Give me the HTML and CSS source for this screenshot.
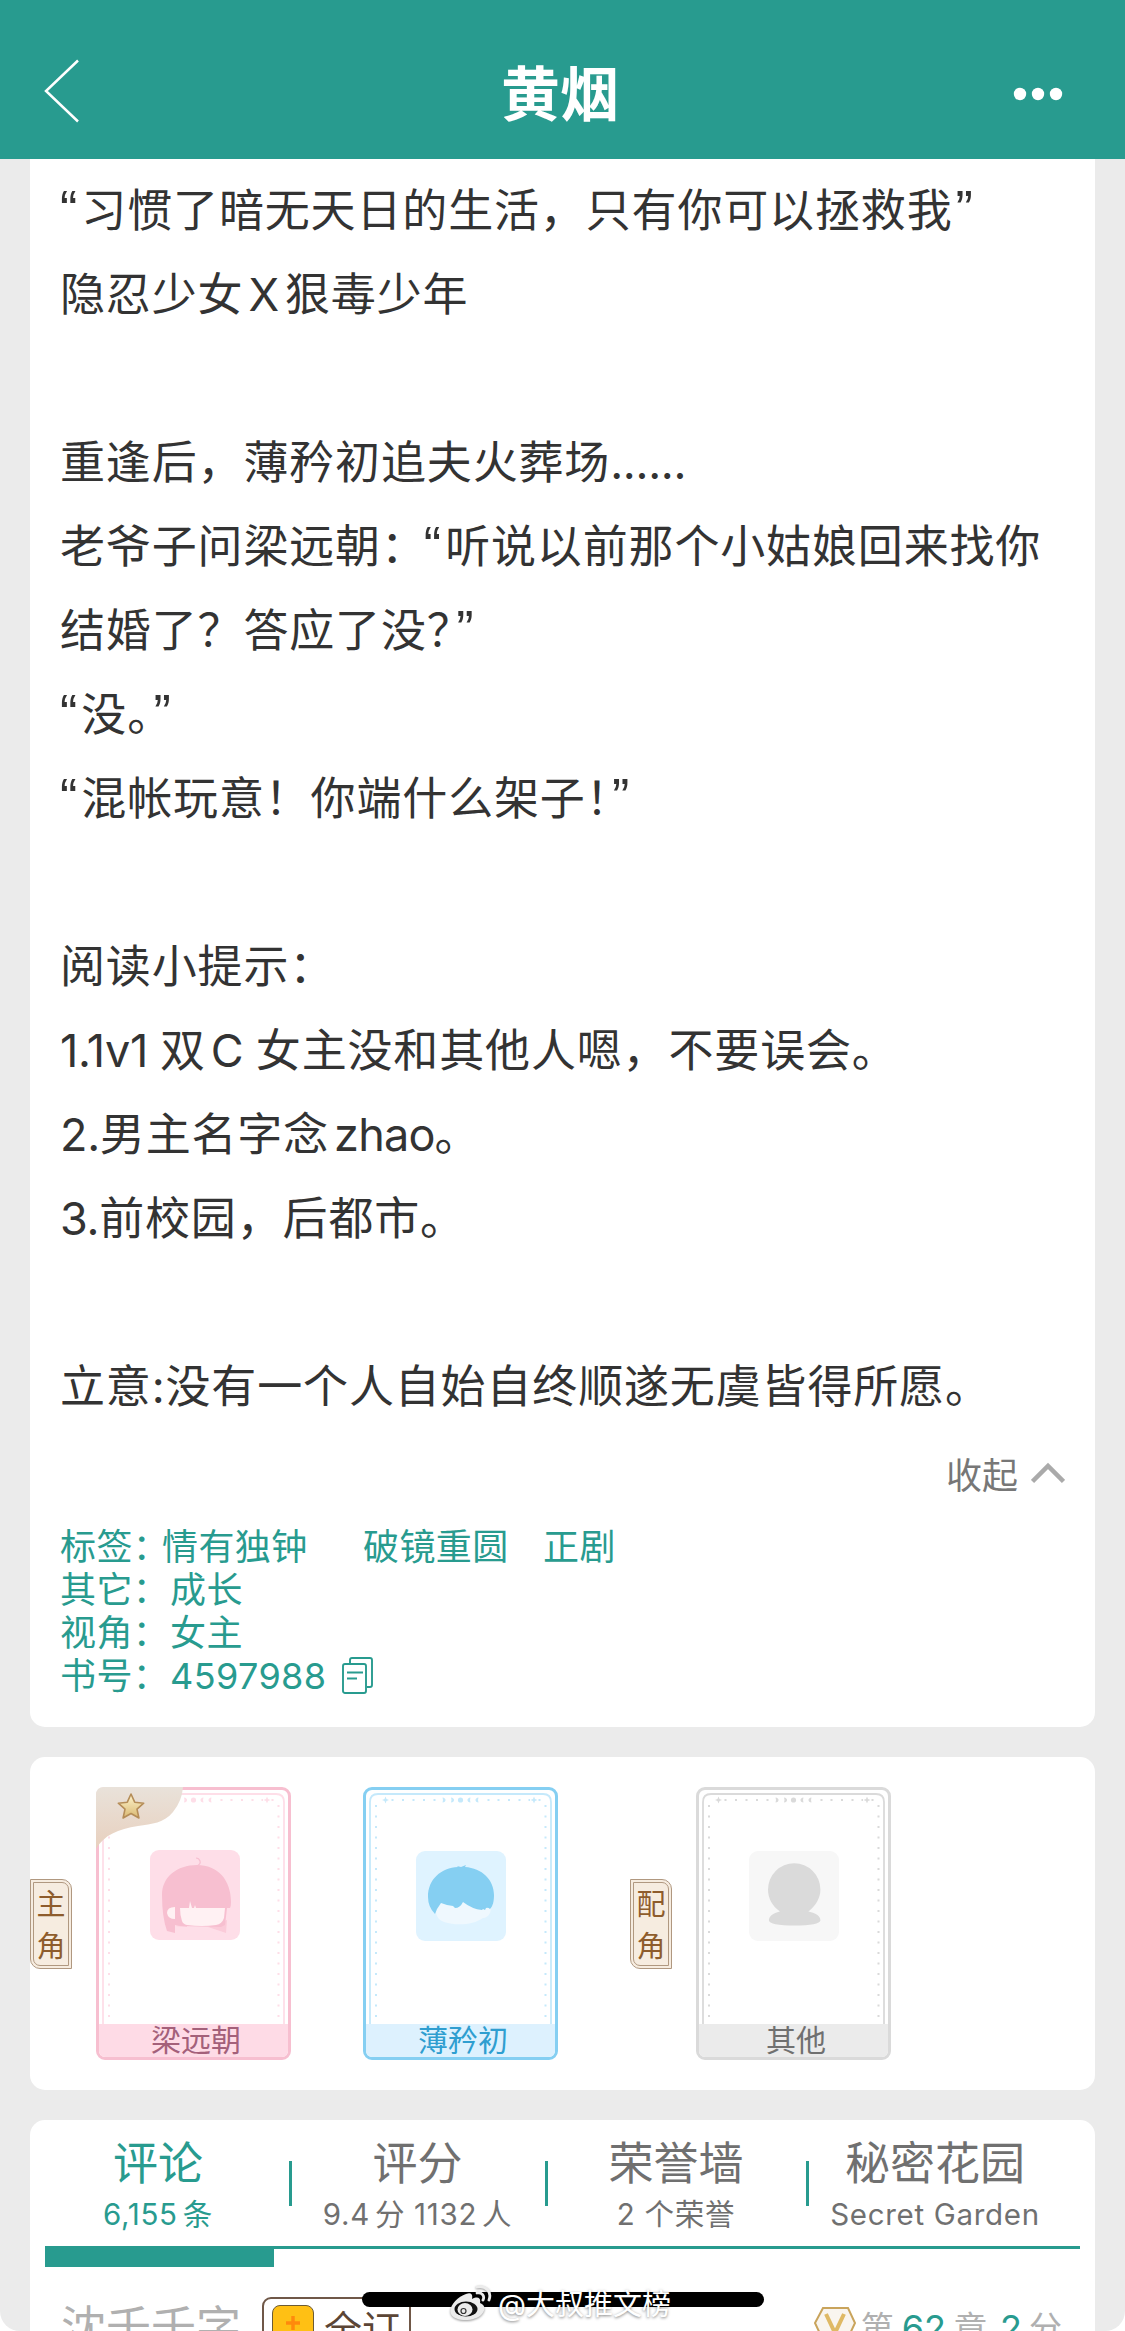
FILE: index.html
```html
<!DOCTYPE html>
<html lang="zh-CN">
<head>
    <meta charset="UTF-8">
    <meta name="viewport" content="width=device-width, initial-scale=1.0">
    <title>黄烟</title>
    <link rel="stylesheet" href="styles.css">
</head>
<body>
    <!-- shared frame for the character cards -->
    <svg class="defs" width="0" height="0">
        <symbol id="frame" viewBox="0 0 195 273">
            <path class="inner-line" d="M7 240V15q0-8 8-8h165q8 0 8 8v225" fill="none" stroke="currentColor" stroke-width="1.8"/>
            <path d="M13 18V230M182.500 18V230" stroke="currentColor" stroke-width="2" stroke-dasharray="2 8.500" fill="none"/>
            <g fill="currentColor">
                <path d="M22.500 9.500l1 2.500 2.500 1-2.500 1-1 2.500-1-2.500-2.500-1 2.500-1zM171 9.500l1 2.500 2.500 1-2.500 1-1 2.500-1-2.500-2.500-1 2.500-1z"/>
                <path d="M28.500 12h2v2h-2zM39 12h2v2h-2zM49.500 12h2v2h-2zM60 12h2v2h-2zM70.500 12h2v2h-2zM124.500 12h2v2h-2zM134.500 12h2v2h-2zM145 12h2v2h-2zM155.500 12h2v2h-2zM165.500 12h1.500v2h-1.500zM175.500 12h2v2h-2z"/>
                <path d="M79.500 10.500q3 .5 3 2.500t-3 2.500q1-2.500 0-5zM88 10.500q3 .5 3 2.500t-3 2.500q1-2.500 0-5zM107.500 10.500q-3 .5-3 2.500t3 2.500q-1-2.500 0-5zM115.500 10.500q-3 .5-3 2.500t3 2.500q-1-2.500 0-5z"/>
                <circle cx="97.500" cy="13" r="2.600"/>
            </g>
        </symbol>
    </svg>

    <header class="navbar">
        <svg class="back" width="36" height="64" viewBox="0 0 36 64"><path d="M34 1.500L2 32l32 30.500" fill="none" stroke="#fff" stroke-width="2.500"/></svg>
        <h1>黄烟</h1>
        <svg class="more" width="50" height="14" viewBox="0 0 50 14" fill="#fff"><circle cx="7" cy="7" r="6.200"/><circle cx="25" cy="7" r="6.200"/><circle cx="43" cy="7" r="6.200"/></svg>
    </header>

    <main class="page">
        <section class="card intro">
            <div class="intro-text">
                <p><q>“</q>习惯了暗无天日的生活，只有你可以拯救我<q class="end">”</q></p>
                <p>隐忍少女<span class="latin">X</span>狠毒少年</p>
                <p>&nbsp;</p>
                <p>重逢后，薄矜初追夫火葬场<span class="dots">......</span></p>
                <p>老爷子问梁远朝：<q class="mid">“</q>听说以前那个小姑娘回来找你</p>
                <p>结婚了？答应了没<span class="half">？</span><q class="end">”</q></p>
                <p><q>“</q>没<span class="half">。</span><q>”</q></p>
                <p><q>“</q>混帐玩意！你端什么架子<span class="half">！</span><q>”</q></p>
                <p>&nbsp;</p>
                <p>阅读小提示：</p>
                <p><span class="num">1.1v1</span><span class="shuang">双</span><span class="num">C </span>女主没和其他人嗯，不要误会。</p>
                <p><span class="num">2.</span>男主名字念<span class="num before">zhao</span>。</p>
                <p><span class="num">3.</span>前校园，后都市。</p>
                <p>&nbsp;</p>
                <p>立意:没有一个人自始自终顺遂无虞皆得所愿。</p>
            </div>
            <div class="collapse">
                <span>收起</span>
                <svg width="34" height="24" viewBox="0 0 34 24"><path d="M1.500 20.500L17 5l15.500 15.500" fill="none" stroke="#aaa" stroke-width="4.500"/></svg>
            </div>
            <div class="tags">
                <div class="tag-row tag-list"><span>标签：</span><span>情有独钟</span><span>破镜重圆</span><span>正剧</span></div>
                <div class="tag-row"><span>其它：</span><span>成长</span></div>
                <div class="tag-row"><span>视角：</span><span>女主</span></div>
                <div class="tag-row">
                    <span>书号：</span><span class="number">4597988</span>
                    <svg class="copy" width="32" height="38" viewBox="0 0 32 38" fill="none" stroke="#289b8f" stroke-width="1.900">
                        <path d="M8 6.500V3q0-2 2-2h18q2 0 2 2v25q0 2-2 2h-3"/>
                        <rect x="1" y="7" width="23" height="29" rx="2"/>
                        <path d="M5 15.500h16M5 21.500h10"/>
                    </svg>
                </div>
            </div>
        </section>

        <section class="card roles">
            <div class="role-label"><span>主</span><span>角</span></div>
            <div class="role pink">
                <svg class="frame"><use href="#frame"/></svg>
                <svg class="corner" width="87" height="62" viewBox="0 0 87 62">
                    <defs>
                        <linearGradient id="cornerFill" x1="0" y1="0" x2="0" y2="1"><stop offset="0" stop-color="#e9e2da"/><stop offset="1" stop-color="#e8d0be"/></linearGradient>
                        <linearGradient id="starFill" x1="0" y1="0" x2="0" y2="1"><stop offset="0" stop-color="#fff5cf"/><stop offset="1" stop-color="#d9b871"/></linearGradient>
                    </defs>
                    <path d="M0 62V8q0-8 8-8h79q-1 14-10 25c-9 11-21 12-35 14C22 42 8 48 0 62z" fill="url(#cornerFill)"/>
                    <path d="M35 7l3.700 8.200 9 1-6.700 6 1.900 8.800-7.900-4.500-7.900 4.500 1.900-8.800-6.700-6 9-1z" fill="url(#starFill)" stroke="#b58d58" stroke-width="1.600" stroke-linejoin="round"/>
                </svg>
                <svg class="avatar" width="90" height="90" viewBox="0 0 90 90">
                    <rect width="90" height="90" rx="9" fill="#fedee8"/>
                    <path d="M58 77l19-7-1 13zM25 76l12-3v4z" fill="#fbcbd9"/>
                    <path d="M47 16q4-2 3-5-1-3-4-3" fill="none" stroke="#f7bfd0" stroke-width="1.200"/>
                    <path d="M12 45C12 27 27 15 47 15c21 0 34 15 34 37q0 4-1 6h-3l-2 17-4 2-40-1-6-1v8l-8-2q-5-14-5-36z" fill="#f7bfd0"/>
                    <path d="M30 58h9l1-7 2 7h2l1-3 1 3h29l-1 10q-2 6-8 7-14 2-29 0-4-1-5-4-2-6-2-13z" fill="#fff1f3"/>
                    <path d="M25 57q-8 0-8 6 1 6 8 6z" fill="#fff1f3"/>
                </svg>
                <div class="name">梁远朝</div>
            </div>
            <div class="role blue">
                <svg class="frame"><use href="#frame"/></svg>
                <svg class="avatar lower" width="90" height="90" viewBox="0 0 90 90">
                    <rect width="90" height="90" rx="9" fill="#dff3ff"/>
                    <path d="M24 50h44q2 7 6 6c2 4-1 11-7 11-10 7-26 8-39 4-6-2-8-7-8-11z" fill="#eff8fe"/>
                    <path d="M19 63q-7-7-7-17c0-18 13-29 30-30l-1-1 4 1 5-2-1 2c17 1 29 13 29 28 0 6-1 11-4 14q-2-2-4-1l-1 2-2-1-1 1q-10-1-19-8-3 6-8 6l-2-2-6-1-6-2-4 6z" fill="#85cff2"/>
                </svg>
                <div class="name">薄矜初</div>
            </div>
            <div class="role-label second"><span>配</span><span>角</span></div>
            <div class="role gray">
                <svg class="frame"><use href="#frame"/></svg>
                <svg class="avatar lower" width="90" height="90" viewBox="0 0 90 90">
                    <rect width="90" height="90" rx="9" fill="#f7f7f7"/>
                    <path d="M31 60.500C23 55 19 47 19 38.500a26.200 26.200 0 0 1 52.400 0c0 8.500-4.500 16-12 22 8 1.500 12 5 12 9 0 3-10 5-26 5s-25.500-2-25.500-5c0-4 4-7.500 11-9z" fill="#dadada"/>
                </svg>
                <div class="name">其他</div>
            </div>
        </section>

        <section class="card comments">
            <nav class="tabs">
                <div class="tab active"><b>评论</b><small>6,155<i></i>条</small></div>
                <div class="tab"><b>评分</b><small>9.4<i></i>分 1132<i></i>人</small></div>
                <div class="tab"><b>荣誉墙</b><small>2 个荣誉</small></div>
                <div class="tab"><b>秘密花园</b><small>Secret Garden</small></div>
            </nav>
            <div class="tab-line"><div class="tab-bar"></div></div>
            <div class="comment-head">
                <span class="user">沈千千字</span>
                <span class="sub-badge"><span class="plus"><svg width="16" height="16" viewBox="0 0 16 16"><path d="M8 1v14M1 8h14" stroke="#ff8a0c" stroke-width="3.500"/></svg></span>全订</span>
                <span class="score">
                    <svg width="44" height="40" viewBox="0 0 44 40"><path d="M10 2h25l7 15-8 17H10L2 17z" fill="#f9f5ef" stroke="#c9a45c" stroke-width="2"/><path d="M13 8l9 19 9-19" fill="none" stroke="#dfb965" stroke-width="4"/></svg>
                    <span>第</span><em>62</em><span>章</span><em class="last">2</em><span>分</span>
                </span>
            </div>
        </section>
    </main>

    <div class="home-bar"></div>
    <div class="watermark">
        <svg width="44" height="38" viewBox="0 0 44 38">
            <path d="M17 10C8 13-1 23 2 30c4 8 24 8 31 0 4-5 3-9-2-11 1-5-2-7-8-4 1-5-1-7-6-5z" fill="#ececec"/>
            <ellipse cx="17" cy="25" rx="11.500" ry="7.500" fill="#111"/>
            <ellipse cx="16" cy="25.500" rx="7.500" ry="6.500" fill="#ececec"/>
            <circle cx="14.500" cy="27" r="2.500" fill="none" stroke="#333" stroke-width="1.200"/>
            <path d="M28 3c9-2 15 5 12 13M28 9c5-1 8 3 6 7" fill="none" stroke="#ececec" stroke-width="2.800" stroke-linecap="round"/>
        </svg>
        <span>@大叔推文榜</span>
    </div>
</body>
</html>
```
FILE: styles.css
```css
* {
    box-sizing: border-box;
}

body {
    margin: 0;
    width: 1125px;
    height: 2331px;
    overflow: hidden;
    position: relative;
    background: #fff;
    font-family: Inter, "Noto Sans CJK SC", sans-serif;
    color: #333;
    text-spacing-trim: space-all;
    text-autospace: no-autospace;
}

svg {
    display: block;
    flex: none;
}

.defs {
    position: absolute;
}

.navbar {
    height: 159px;
    padding: 59px 62px 0 44px;
    background: #289b8f;
    display: flex;
    justify-content: space-between;
    align-items: flex-start;
}

.navbar h1 {
    margin: 3px 0 0 27px;
    font-size: 59px;
    line-height: 66px;
    font-weight: 700;
    color: #fff;
}

.more {
    margin-top: 28px;
}

.page {
    height: 2172px;
    padding: 0 30px;
    background: #ebebeb;
    border-radius: 0 0 20px 20px;
    overflow: hidden;
}

.card {
    background: #fff;
    border-radius: 15px;
    margin-bottom: 30px;
}

.intro {
    height: 1568px;
    padding: 10px 30px 0;
    border-radius: 0 0 15px 15px;
}

.intro-text p {
    margin: 0;
    height: 84px;
    line-height: 84px;
    font-size: 45px;
    letter-spacing: 0.85px;
    white-space: nowrap;
}

/* round quote marks */
q {
    quotes: none;
    font-family: "Liberation Sans", sans-serif;
    font-size: 52px;
    line-height: 1;
    letter-spacing: 4px;
}

q.end {
    margin-left: 3px;
}

q.mid {
    margin-left: -3px;
}

.latin {
    margin: 0 5px;
}

.shuang {
    margin: 0 5px 0 12px;
}

.num,
.dots {
    letter-spacing: -0.3px;
}

.before {
    margin-left: 5px;
    letter-spacing: -0.8px;
}

.half {
    font-feature-settings: "halt";
    margin-right: 3px;
}

.collapse {
    height: 87px;
    display: flex;
    justify-content: flex-end;
    align-items: center;
    gap: 13px;
    font-size: 36px;
    color: #777;
}

.tags {
    color: #289b8f;
    font-size: 36px;
    letter-spacing: 0.4px;
    padding-top: 10px;
}

.tag-row {
    height: 43px;
    line-height: 43px;
    display: flex;
    white-space: nowrap;
}

.tag-row span:first-child {
    width: 110px;
}

.tag-list span:first-child {
    width: 102px;
}

.tag-list span:nth-child(2) {
    width: 201px;
}

.tag-list span:nth-child(3) {
    width: 180px;
}

.copy {
    margin: 2px 0 0 16px;
}

.roles {
    height: 333px;
    display: flex;
    align-items: flex-start;
    padding-top: 30px;
}

.role-label {
    width: 42px;
    height: 90px;
    margin: 92px 24px 0 0;
    padding-top: 1px;
    border: 4px double #b09880;
    border-radius: 0 10px 0 10px;
    background: #f6ece0;
    color: #8e5c2c;
    font-size: 29px;
    line-height: 42px;
    display: flex;
    flex-direction: column;
    align-items: center;
}

.role {
    position: relative;
    width: 195px;
    height: 273px;
    border: 3px solid currentColor;
    border-radius: 9px;
    display: flex;
    flex-direction: column;
    align-items: center;
}

.pink { color: #f7bfd0; }
.blue { color: #85cff2; margin-left: 72px; }
.gray { color: #dadada; }

.role-label.second {
    margin-left: 72px;
}

.frame {
    position: absolute;
    left: -3px;
    top: -3px;
    width: 195px;
    height: 273px;
}

.pink .frame { color: #fedee8; }
.blue .frame { color: #c5e9fb; }

.corner {
    position: absolute;
    left: -3px;
    top: -3px;
}

.avatar {
    margin-top: 60px;
    margin-left: 3px;
}

.avatar.lower {
    margin-top: 61px;
    margin-left: 0;
}

.name {
    position: relative;
    width: 100%;
    height: 33px;
    margin-top: auto;
    padding-left: 5px;
    border-radius: 0 0 6px 6px;
    text-align: center;
    font-size: 30px;
    line-height: 33px;
}

.pink .name { background: #fedbe6; color: #a4607a; }
.blue .name { background: #ddf1fe; color: #2f9ed0; }
.gray .name { background: #ebebeb; color: #707070; }

.comments {
    height: 300px;
    padding: 0 15px;
}

.tabs {
    display: grid;
    grid-template-columns: 246px 256px 261px 272px;
    height: 126px;
    color: #707070;
}

.tab {
    position: relative;
    padding: 17px 3px 0 0;
    display: flex;
    flex-direction: column;
    align-items: center;
}

.tab b {
    font-size: 45px;
    line-height: 54px;
    font-weight: 400;
}

.tab small {
    font-size: 29.5px;
    line-height: 46px;
    letter-spacing: 0.7px;
    white-space: pre;
}

.tab i {
    display: inline-block;
    width: 5px;
}

.tab:not(:last-child)::after {
    content: "";
    position: absolute;
    right: -1px;
    top: 41px;
    width: 3px;
    height: 45px;
    background: #289b8f;
}

.tab.active {
    color: #289b8f;
    padding-right: 20px;
}

.tab:last-child {
    padding-right: 18px;
}

.tab-line {
    border-top: 3px solid #289b8f;
    height: 21px;
}

.tab-bar {
    width: 229px;
    height: 18px;
    background: #289b8f;
}

.comment-head {
    display: flex;
    align-items: flex-start;
    padding: 30px 18px 0 16px;
    white-space: nowrap;
}

.user {
    margin-top: 1px;
    font-size: 45px;
    line-height: 60px;
    color: #b0b0b0;
}

.sub-badge {
    width: 149px;
    height: 60px;
    margin-left: 21px;
    padding: 6px 8px;
    border: 2px solid #705848;
    border-radius: 9px;
    display: flex;
    gap: 10px;
    font-size: 38px;
    line-height: 48px;
    color: #5b4535;
}

.plus {
    width: 42px;
    height: 42px;
    flex: none;
    border: 1.5px solid #6b5b35;
    border-radius: 8px;
    background: #ffc014;
    display: grid;
    place-items: center;
    padding-bottom: 6px;
}

.score {
    margin: 10px 0 0 auto;
    display: flex;
    font-size: 33px;
    line-height: 42px;
    color: #b0b0b0;
}

.score svg {
    margin: -1px 4px 0 0;
}

.score em {
    font-style: normal;
    font-size: 36px;
    color: #289b8f;
    margin: 0 8px;
}

.score .last {
    margin: 0 7px 0 13px;
}

.home-bar {
    position: absolute;
    left: 362px;
    top: 2292px;
    width: 402px;
    height: 15px;
    border-radius: 8px;
    background: #000;
}

.watermark {
    position: absolute;
    left: 449px;
    top: 2284px;
    display: flex;
    gap: 5px;
    color: #fff;
    font-size: 29px;
    line-height: 42px;
    text-shadow: 0 1px 3px rgba(0, 0, 0, 0.5);
}

.watermark svg {
    filter: drop-shadow(0 1px 1px rgba(0, 0, 0, 0.4));
}
```
